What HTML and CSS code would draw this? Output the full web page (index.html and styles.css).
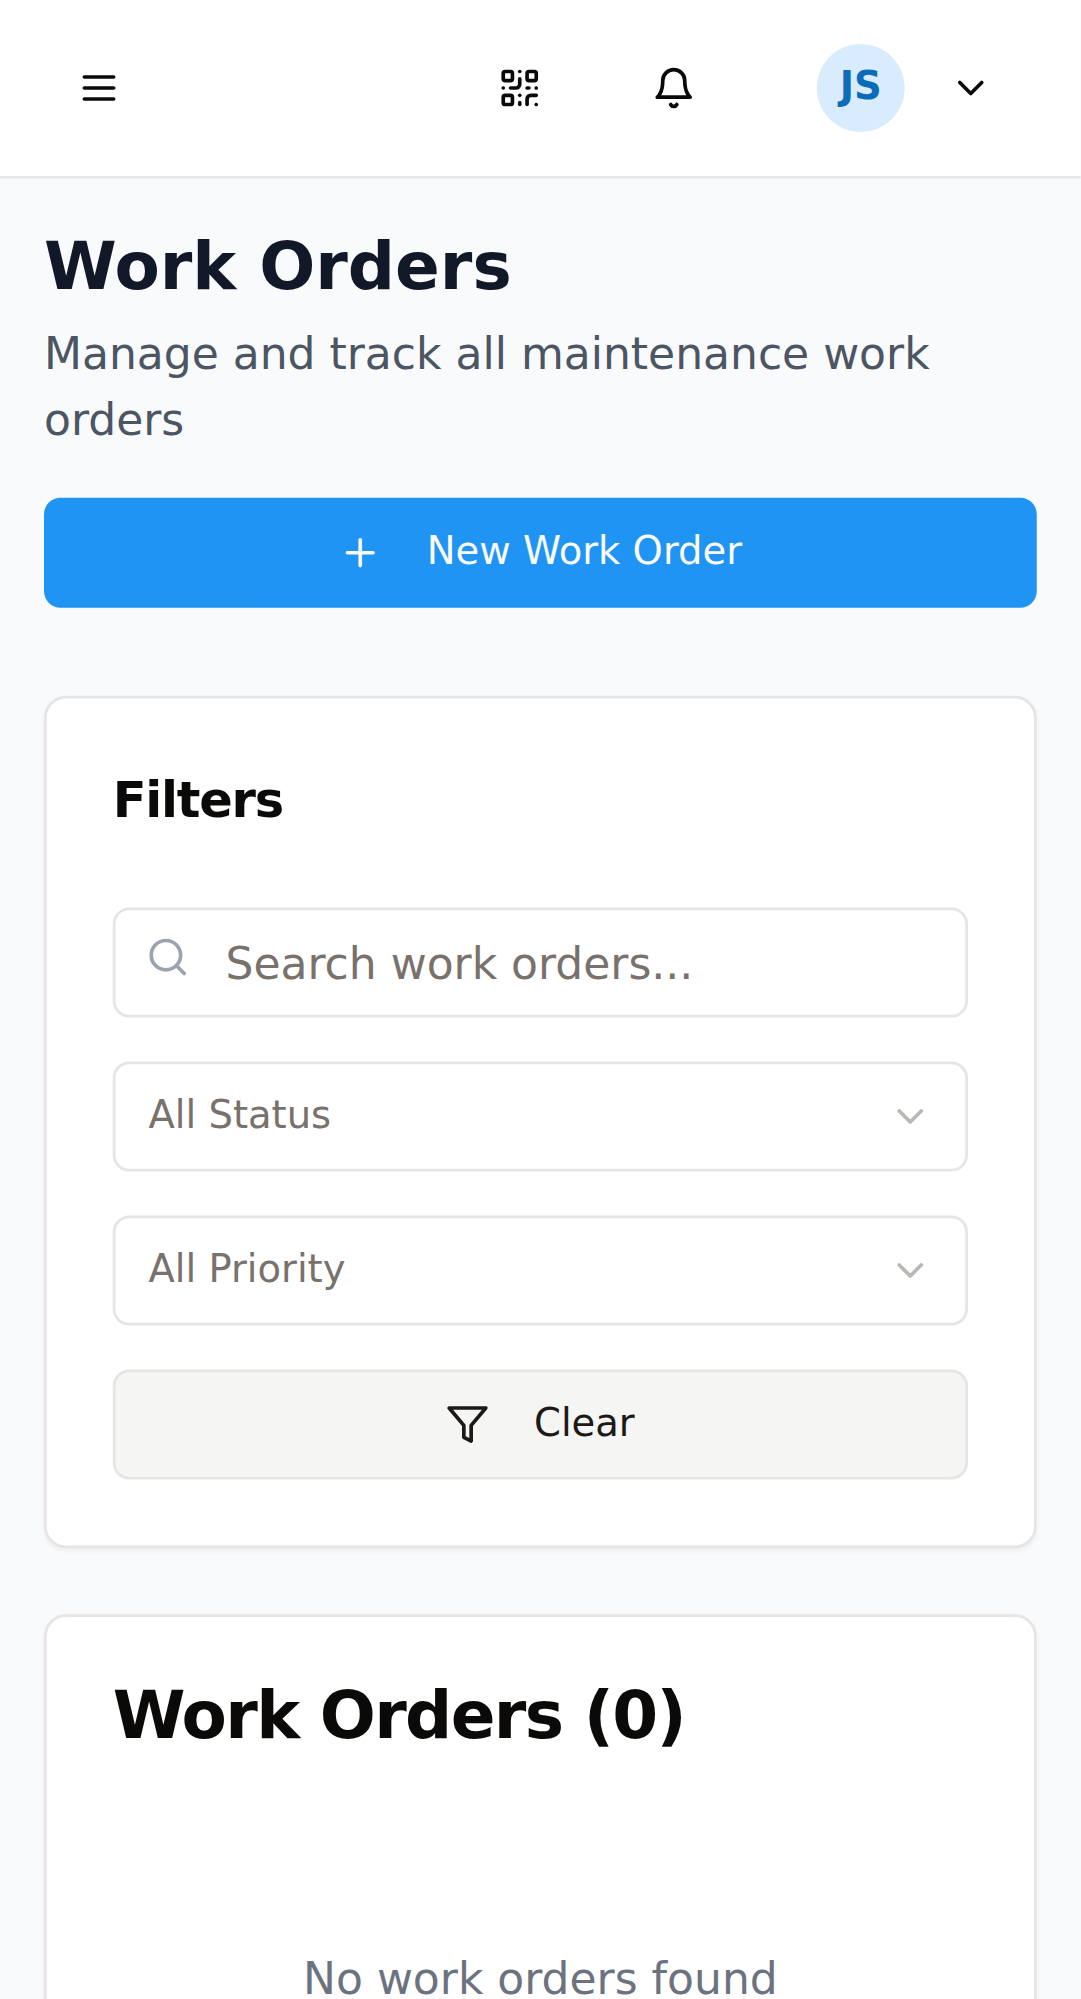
FILE: index.html
```html
<!DOCTYPE html>
<html lang="en">
<head>
<meta charset="utf-8">
<title>Work Orders</title>
<link rel="stylesheet" href="styles.css">
</head>
<body>
<div class="app">
  <header class="topbar">
    <button class="icon-button" aria-label="Menu">
      <svg class="icon" viewBox="0 0 24 24"><path d="M4 12h16M4 6h16M4 18h16"/></svg>
    </button>
    <div class="topbar-actions">
      <button class="icon-button" aria-label="Scan">
        <svg class="icon" viewBox="0 0 24 24"><rect width="5" height="5" x="3" y="3" rx="1"/><rect width="5" height="5" x="16" y="3" rx="1"/><rect width="5" height="5" x="3" y="16" rx="1"/><path d="M21 16h-3a2 2 0 0 0-2 2v3"/><path d="M21 21v.01"/><path d="M12 7v3a2 2 0 0 1-2 2H7"/><path d="M3 12h.01"/><path d="M12 3h.01"/><path d="M12 16v.01"/><path d="M16 12h1"/><path d="M21 12v.01"/><path d="M12 21v-1"/></svg>
      </button>
      <button class="icon-button" aria-label="Notifications">
        <svg class="icon" viewBox="0 0 24 24"><path d="M6 8a6 6 0 0 1 12 0c0 7 3 9 3 9H3s3-2 3-9"/><path d="M10.3 21a1.94 1.94 0 0 0 3.4 0"/></svg>
      </button>
      <button class="user-menu" aria-label="Account">
        <span class="avatar"><span class="label">JS</span></span>
        <svg class="icon" viewBox="0 0 24 24"><path d="m6 9 6 6 6-6"/></svg>
      </button>
    </div>
  </header>

  <main class="page">
    <section class="intro">
      <div>
        <h1 class="page-title">Work Orders</h1>
        <p class="page-subtitle">Manage and track all maintenance work orders</p>
      </div>
      <button class="button button-primary">
        <svg class="icon" viewBox="0 0 24 24"><path d="M5 12h14M12 5v14"/></svg>
        <span class="label">New Work Order</span>
      </button>
    </section>

    <div class="cards">
      <section class="card">
        <div class="card-header"><h3 class="card-title card-title-small">Filters</h3></div>
        <div class="filters">
          <div class="search">
            <svg class="icon search-icon" viewBox="0 0 24 24"><circle cx="11" cy="11" r="8"/><path d="m21 21-4.3-4.3"/></svg>
            <input class="search-input" type="text" placeholder="Search work orders...">
          </div>
          <button class="select">
            <span class="label">All Status</span>
            <svg class="icon select-icon" viewBox="0 0 24 24"><path d="m6 9 6 6 6-6"/></svg>
          </button>
          <button class="select">
            <span class="label">All Priority</span>
            <svg class="icon select-icon" viewBox="0 0 24 24"><path d="m6 9 6 6 6-6"/></svg>
          </button>
          <button class="button button-outline">
            <svg class="icon" viewBox="0 0 24 24"><polygon points="22 3 2 3 10 12.46 10 19 14 21 14 12.46 22 3"/></svg>
            <span class="label">Clear</span>
          </button>
        </div>
      </section>

      <section class="card card-list">
        <div class="card-header"><h3 class="card-title">Work Orders (0)</h3></div>
        <div class="empty">No work orders found</div>
      </section>
    </div>
  </main>
</div>
</body>
</html>
```
FILE: styles.css
```css
*, *::before, *::after {
  box-sizing: border-box;
}

html {
  height: 100%;
  overflow: hidden;
  background: #f9fafb;
}

body {
  margin: 0;
  height: 100%;
  overflow: hidden;
  font-family: "DejaVu Sans", sans-serif;
  font-size: 16px;
  line-height: 24px;
  color: #0c0a09;
}

h1, h3, p {
  margin: 0;
}

button, input {
  margin: 0;
  padding: 0;
  border: 0;
  background: none;
  color: inherit;
  font: inherit;
}

/* A 393px wide phone layout, enlarged to the window */
.app {
  width: 393px;
  height: 727px;
  overflow: hidden;
  transform: scale(2.75);
  transform-origin: 0 0;
  background: #f9fafb;
}

.icon {
  display: block;
  flex: none;
  width: 16px;
  height: 16px;
  fill: none;
  stroke: currentColor;
  stroke-width: 2;
  stroke-linecap: round;
  stroke-linejoin: round;
}

/* Small labels sit slightly above the centre line */
.label {
  padding-bottom: 2px;
}

/* Top bar */
.topbar {
  display: flex;
  align-items: center;
  justify-content: space-between;
  height: 65px;
  padding: 0 16px;
  background: #fff;
  border-bottom: 1px solid #e5e7eb;
}

.topbar-actions {
  display: flex;
  align-items: center;
  gap: 16px;
}

.icon-button {
  padding: 12px;
}

.user-menu {
  display: flex;
  align-items: center;
  gap: 16px;
  padding: 0 16px;
}

.avatar {
  display: flex;
  align-items: center;
  justify-content: center;
  width: 32px;
  height: 32px;
  border-radius: 50%;
  background: #d8ecfd;
  color: #0b6cba;
  font-size: 14px;
  line-height: 20px;
  font-weight: 600;
}

/* Page */
.page {
  padding: 16px;
}

.intro {
  display: flex;
  flex-direction: column;
  gap: 16px;
  margin-bottom: 32px;
}

.page-title {
  font-size: 24px;
  line-height: 32px;
  font-weight: 700;
  color: #111827;
}

.page-subtitle {
  margin-top: 4px;
  color: #4b5563;
}

.button {
  display: flex;
  align-items: center;
  justify-content: center;
  gap: 16px;
  width: 100%;
  height: 40px;
  border-radius: 6px;
  font-size: 14px;
  line-height: 20px;
}

.button-primary {
  background: #2094f3;
  color: #fafaf9;
}

.button-outline {
  border: 1px solid #e7e5e4;
  background: #f5f5f4;
  color: #1c1917;
}

/* Cards */
.cards {
  display: flex;
  flex-direction: column;
  gap: 24px;
}

.card {
  border: 1px solid #e7e5e4;
  border-radius: 8px;
  background: #fff;
  box-shadow: 0 1px 2px rgba(0, 0, 0, 0.05);
}

.card-header {
  padding: 24px;
}

.card-title {
  font-size: 24px;
  line-height: 24px;
  font-weight: 600;
  letter-spacing: -0.025em;
}

.card-title-small {
  padding-bottom: 2px;
  font-size: 18px;
  line-height: 26px;
}

.filters {
  display: flex;
  flex-direction: column;
  gap: 16px;
  padding: 0 24px 24px;
}

.search {
  position: relative;
}

.search-icon {
  position: absolute;
  left: 12px;
  top: 10px;
  color: #9ca3af;
}

.search-input {
  display: block;
  width: 100%;
  height: 40px;
  padding: 8px 12px 8px 40px;
  border: 1px solid #e7e5e4;
  border-radius: 6px;
  background: #fff;
}

.search-input::placeholder {
  color: #78716c;
  opacity: 1;
}

.select {
  display: flex;
  align-items: center;
  justify-content: space-between;
  height: 40px;
  padding: 0 12px;
  border: 1px solid #e7e5e4;
  border-radius: 6px;
  background: #fff;
  color: #78716c;
  font-size: 14px;
  line-height: 20px;
}

.select-icon {
  opacity: 0.5;
}

.empty {
  padding: 48px 24px 72px;
  text-align: center;
  color: #6b7280;
}
```
